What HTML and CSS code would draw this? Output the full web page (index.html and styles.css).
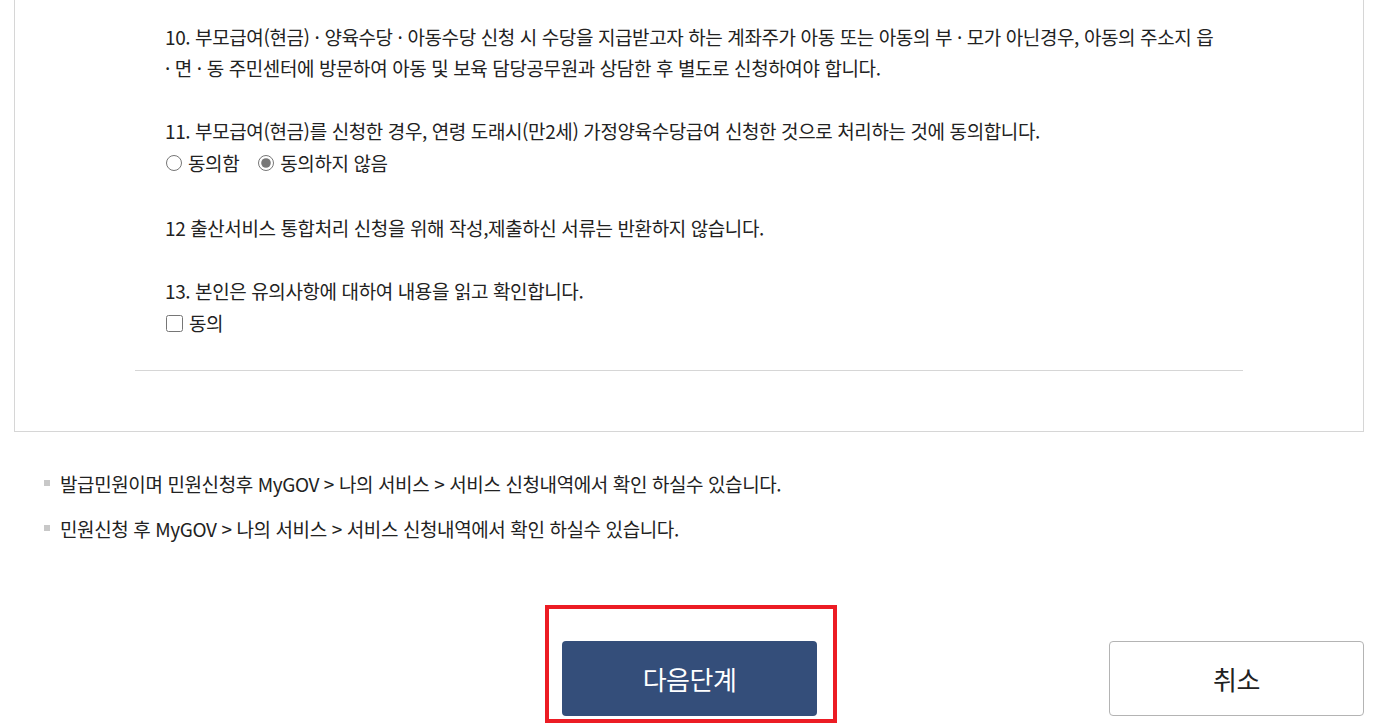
FILE: index.html
```html
<!DOCTYPE html>
<html lang="ko">
  <head>
    <meta charset="UTF-8" />
    <title>출산서비스 통합처리 신청</title>
    <link rel="stylesheet" href="styles.css">
  </head>
  <body>
    <div class="terms-box">
      <ol class="terms-list">
        <li class="term">
          10. 부모급여(현금) · 양육수당 · 아동수당 신청 시 수당을 지급받고자 하는 계좌주가 아동 또는 아동의 부 · 모가 아닌경우, 아동의 주소지 읍<br>
          · 면 · 동 주민센터에 방문하여 아동 및 보육 담당공무원과 상담한 후 별도로 신청하여야 합니다.
        </li>
        <li class="term">
          11. 부모급여(현금)를 신청한 경우, 연령 도래시(만2세) 가정양육수당급여 신청한 것으로 처리하는 것에 동의합니다.
          <div class="choice">
            <label><input type="radio" name="agree11" />동의함</label>
            <label><input type="radio" name="agree11" checked />동의하지 않음</label>
          </div>
        </li>
        <li class="term">
          12 출산서비스 통합처리 신청을 위해 작성,제출하신 서류는 반환하지 않습니다.
        </li>
        <li class="term">
          13. 본인은 유의사항에 대하여 내용을 읽고 확인합니다.
          <div class="choice">
            <label><input type="checkbox" />동의</label>
          </div>
        </li>
      </ol>
    </div>

    <ul class="notes">
      <li>발급민원이며 민원신청후 MyGOV &gt; 나의 서비스 &gt; 서비스 신청내역에서 확인 하실수 있습니다.</li>
      <li>민원신청 후 MyGOV &gt; 나의 서비스 &gt; 서비스 신청내역에서 확인 하실수 있습니다.</li>
    </ul>

    <div class="actions">
      <span></span>
      <span class="highlight">
        <button class="btn btn-primary">다음단계</button>
      </span>
      <button class="btn btn-cancel">취소</button>
    </div>
  </body>
</html>
```

FILE: styles.css
```css
html,
body {
  height: 725px;
}

body {
  margin: 0;
  padding: 0;
  font-family: "Noto Sans CJK KR", "Noto Sans", sans-serif;
  color: #222;
  background-color: white;
  overflow: hidden;
}

.terms-box {
  margin: -1px 12px 0 14px;
  border: 1px solid #d6d6d6;
  padding: 21px 0 60px;
}

.terms-list {
  list-style: none;
  margin: 0 120px 0 120px;
  padding: 0 0 30px 30px;
  border-bottom: 1px solid #d6d6d6;
}

.term {
  font-size: 19px;
  line-height: 31px;
  letter-spacing: -0.4px;
  margin-bottom: 32px;
}

.term:last-child {
  margin-bottom: 0;
}

.choice {
  display: flex;
  gap: 18px;
  line-height: 34px;
}

.choice label {
  display: flex;
  align-items: center;
}

.choice input {
  margin: 0 6px 0 1px;
  accent-color: #777;
}

.choice input[type="radio"] {
  width: 16px;
  height: 16px;
}

.choice input[type="checkbox"] {
  width: 17px;
  height: 17px;
}

.notes {
  list-style: none;
  margin: 36px 0 0 44px;
  padding: 0;
}

.notes li {
  position: relative;
  padding-left: 16px;
  font-size: 19px;
  line-height: 31px;
  letter-spacing: -0.4px;
  margin-bottom: 14px;
}

.notes li::before {
  content: "";
  position: absolute;
  left: 0;
  top: 12px;
  width: 6px;
  height: 6px;
  background-color: #c8c8c8;
}

.actions {
  display: grid;
  grid-template-columns: 1fr auto 1fr;
  align-items: center;
  margin: 97px 12px 0 15px;
}

.highlight {
  position: relative;
  display: block;
}

.highlight::after {
  content: "";
  position: absolute;
  top: -36px;
  left: -17px;
  right: -20px;
  bottom: -7px;
  border: 4px solid #ec1c24;
  pointer-events: none;
}

.btn {
  display: block;
  width: 255px;
  height: 75px;
  border-radius: 4px;
  font-family: "Noto Sans CJK KR", "Noto Sans", sans-serif;
  font-size: 26px;
  letter-spacing: -0.5px;
  cursor: pointer;
}

.btn-primary {
  background-color: #344e7a;
  border: none;
  color: white;
}

.btn-cancel {
  justify-self: end;
  background-color: white;
  border: 1px solid #b4b4b4;
  color: #222;
}
```
